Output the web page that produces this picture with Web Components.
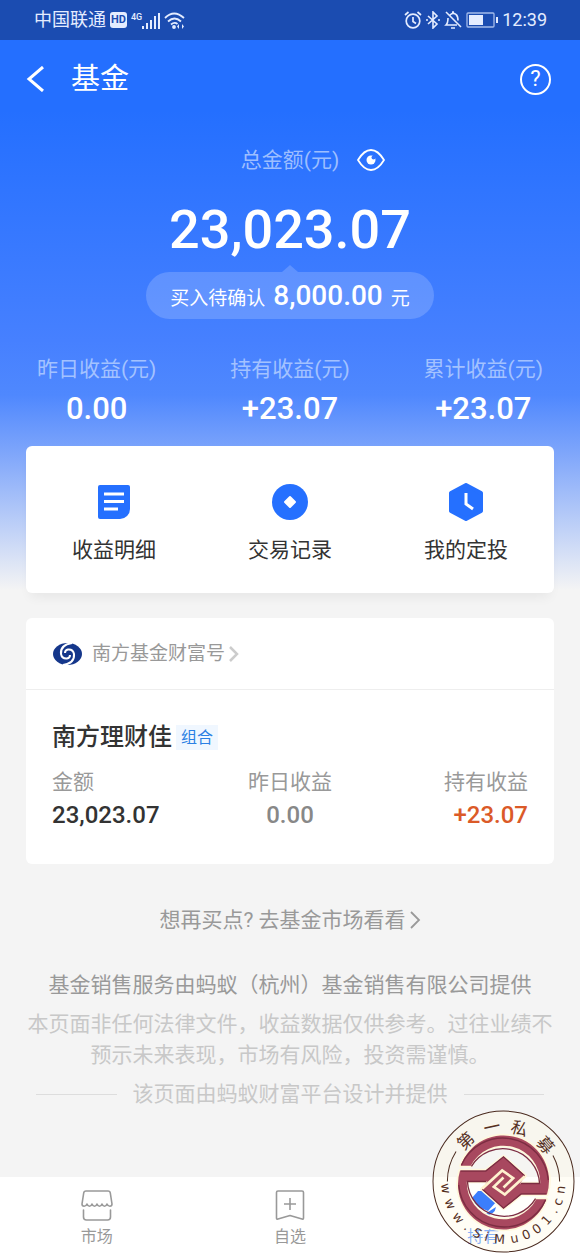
<!DOCTYPE html>
<html lang="zh-CN">
<head>
<meta charset="utf-8">
<meta name="viewport" content="width=device-width, initial-scale=1">
<title>基金</title>
<style>
  html, body { margin: 0; padding: 0; }
  body {
    background: #f4f4f4;
    color: #333;
    font-family: Roboto, "Noto Sans CJK SC", sans-serif;
    font-size: 21px;
    line-height: 28px;
  }
</style>
</head>
<body>
<fund-page>
  <fund-hero>
    <status-bar></status-bar>
    <page-header>基金</page-header>
    <total-amount pending="8,000.00">23,023.07</total-amount>
    <figure-row>
      <figure-item label="昨日收益(元)">0.00</figure-item>
      <figure-item label="持有收益(元)">+23.07</figure-item>
      <figure-item label="累计收益(元)">+23.07</figure-item>
    </figure-row>
    <action-card>
      <quick-action icon="list">收益明细</quick-action>
      <quick-action icon="record">交易记录</quick-action>
      <quick-action icon="plan">我的定投</quick-action>
    </action-card>
  </fund-hero>
  <holding-card></holding-card>
  <page-notice></page-notice>
  <tab-bar slot="tabs">
    <tab-item icon="market">市场</tab-item>
    <tab-item icon="watch">自选</tab-item>
    <tab-item icon="hold" active>持有</tab-item>
  </tab-bar>
  <site-stamp slot="stamp"></site-stamp>
</fund-page>

<script>
const icons = {
  list: `<svg width="36" height="36" viewBox="0 0 36 36"><path d="M4 1h28a2 2 0 0 1 2 2v22a10 10 0 0 1-10 10H4a2 2 0 0 1-2-2V3a2 2 0 0 1 2-2z" fill="#2570ff"/><path d="M8 10h20M8 17.500h20M8 25h14" stroke="#fff" stroke-width="3"/></svg>`,
  record: `<svg width="36" height="36" viewBox="0 0 36 36"><circle cx="18" cy="18" r="18" fill="#2570ff"/><path d="M18 13l5 5-5 5-5-5z" fill="#fff" stroke="#fff" stroke-width="2" stroke-linejoin="round"/></svg>`,
  plan: `<svg width="36" height="38" viewBox="0 0 36 38"><path d="M18 2l15 8v18l-15 8-15-8V10z" fill="#2570ff" stroke="#2570ff" stroke-width="4" stroke-linejoin="round"/><path d="M18 10v11l7 5" fill="none" stroke="#fff" stroke-width="3"/></svg>`,
  market: `<svg width="32" height="32" viewBox="0 0 32 32" fill="none" stroke="#999" stroke-width="1.600" stroke-linejoin="round" stroke-linecap="round"><path d="M5 1h22q2 0 2.300 2l1.700 11c0 3-4 3-5 0-1 3-4 3-5 0-1 3-4 3-5 0-1 3-4 3-5 0-1 3-4 3-5 0-1 3-5 3-5 0L2.700 3Q3 1 5 1z"/><path d="M2.500 20v7q0 3 3 3h21q3 0 3-3v-7"/></svg>`,
  watch: `<svg width="32" height="32" viewBox="0 0 32 32" fill="none" stroke="#999" stroke-width="1.600" stroke-linejoin="round"><path d="M4 1h24q1.500 0 1.500 1.500V28q0 1.500-1.500 1L16 25.500 4 29q-1.500.500-1.500-1V2.500Q2.500 1 4 1zM16 8v12M10 14h12"/></svg>`,
  hold: `<svg width="32" height="32" viewBox="0 0 32 32" fill="#2570ff"><path d="M11 1h15q4 0 4 4v6l-9 10L4 14q0-3 1-6z"/><path d="M29 17q-1 8-12 9l4-4z"/></svg>`
};

class FundPage extends HTMLElement {
  connectedCallback() {
    this.attachShadow({ mode: 'open' }).innerHTML = `
      <style>
        :host { position: relative; display: flex; flex-direction: column; min-height: 100vh; }
        main { flex: 1; }
      </style>
      <main><slot></slot></main>
      <slot name="tabs"></slot>
      <slot name="stamp"></slot>
    `;
  }
}

class FundHero extends HTMLElement {
  connectedCallback() {
    this.attachShadow({ mode: 'open' }).innerHTML = `
      <style>
        :host {
          display: block;
          color: #fff;
          background: linear-gradient(#246fff 0, #246fff 110px, #4680ff 340px, #4f88fe 395px, #7ca4fb 450px, #f4f4f4 590px);
        }
      </style>
      <slot></slot>
    `;
  }
}

class StatusBar extends HTMLElement {
  connectedCallback() {
    this.attachShadow({ mode: 'open' }).innerHTML = `
      <style>
        :host {
          display: flex;
          justify-content: space-between;
          align-items: center;
          height: 40px;
          padding: 0 33px 0 34px;
          background: #1b4cb1;
          color: #e4ecff;
          font-size: 18px;
        }
        div { display: flex; align-items: center; gap: 4px; }
        .hd { background: #e4ecff; color: #1b4cb1; border-radius: 3px; font-size: 11px; font-weight: 700; line-height: 16px; padding: 0 1px; }
        .net { align-self: flex-start; font-size: 9px; line-height: 10px; font-weight: 500; }
        .signal { gap: 0; }
      </style>
      <div>
        <span>中国联通</span><span class="hd">HD</span>
        <div class="signal">
          <span class="net">4G</span>
          <svg width="18" height="17" viewBox="0 0 18 17" stroke="#e4ecff" stroke-width="2"><path d="M1 17v-3M5 17v-6M9 17V8M13 17V4M17 17V1"/></svg>
        </div>
        <svg width="21" height="17" viewBox="0 0 21 17" fill="none" stroke="#e4ecff" stroke-width="1.800"><path d="M1 6q9-9 19 0M4 9.500q6.500-6 13 0M7 12.500q3.500-3 6.500-.500"/><circle cx="10" cy="15" r="1" fill="#e4ecff"/><path d="M15 12v5l-2-2.500zM18 12v5l2-2.500z" stroke="none" fill="#e4ecff"/></svg>
      </div>
      <div>
        <svg width="18" height="18" viewBox="0 0 18 18" fill="none" stroke="#e4ecff" stroke-width="1.700"><circle cx="9" cy="10" r="6.800"/><path d="M9 6v4.500l3 2M1 4l3.500-3M17 4l-3.500-3"/></svg>
        <svg width="14" height="18" viewBox="0 0 14 18" fill="none" stroke="#e4ecff" stroke-width="1.600"><path d="M2 5l9 8-4 4V1l4 4-9 8"/><path d="M0 9h2M12 9h2"/></svg>
        <svg width="18" height="18" viewBox="0 0 18 18" fill="none" stroke="#e4ecff" stroke-width="1.600"><path d="M2 1l15 15M6 4q3-3 6-.500 2 1.500 2 6M4 7q0 5-2 7h11M8 1h2M7 17h4"/></svg>
        <svg width="32" height="16" viewBox="0 0 32 16"><rect x="1" y="1" width="27" height="14" rx="1" fill="none" stroke="#a4baea" stroke-width="1.300"/><path d="M3 3h14v10H3zM30 5h2v6h-2z" fill="#e4ecff"/></svg>
        <span>12:39</span>
      </div>
    `;
  }
}

class PageHeader extends HTMLElement {
  connectedCallback() {
    this.attachShadow({ mode: 'open' }).innerHTML = `
      <style>
        :host { display: flex; align-items: center; height: 78px; padding: 0 29px 0 26px; }
        button { display: flex; padding: 0; border: 0; background: none; color: inherit; cursor: pointer; }
        h1 { flex: 1; margin: 0 0 0 25px; font-size: 29px; line-height: 40px; font-weight: 400; }
        .help {
          box-sizing: border-box;
          width: 31px; height: 31px;
          align-items: center;
          justify-content: center;
          border: 2px solid #fff;
          border-radius: 50%;
          font: 22px/28px Roboto, sans-serif;
        }
      </style>
      <button aria-label="返回"><svg width="20" height="26" viewBox="0 0 20 26" fill="none" stroke="#fff" stroke-width="3"><path d="M17 1L3 13l14 12"/></svg></button>
      <h1><slot></slot></h1>
      <button class="help">?</button>
    `;
  }
}

class TotalAmount extends HTMLElement {
  connectedCallback() {
    this.attachShadow({ mode: 'open' }).innerHTML = `
      <style>
        :host { display: flex; flex-direction: column; align-items: center; padding-top: 28px; }
        .label { display: flex; align-items: center; gap: 18px; padding-left: 46px; color: #9dbeff; }
        button { display: flex; padding: 0; border: 0; background: none; cursor: pointer; }
        .amount { margin: 24px 0 10px; font-size: 54px; line-height: 64px; font-weight: 500; }
        .pending {
          position: relative;
          display: flex;
          align-items: baseline;
          gap: 8px;
          padding: 0 24px;
          border-radius: 24px;
          background: rgba(255, 255, 255, 0.18);
          font-size: 19px;
          line-height: 47px;
        }
        .pending::before {
          content: "";
          position: absolute;
          left: calc(50% - 8px);
          top: -7px;
          border: 8px solid transparent;
          border-top: 0;
          border-bottom: 7px solid rgba(255, 255, 255, 0.18);
        }
        .pending span { line-height: 28px; }
        b { font-size: 28px; font-weight: 500; }
      </style>
      <div class="label">
        <span>总金额(元)</span>
        <button aria-label="隐藏金额"><svg width="28" height="22" viewBox="0 0 28 22"><path d="M1 11Q7 1 14 1t13 10q-6 10-13 10T1 11z" fill="none" stroke="#fff" stroke-width="1.800"/><circle cx="14" cy="11" r="4.500" fill="#fff"/><circle cx="16.500" cy="8.500" r="2" fill="#3274ff"/></svg></button>
      </div>
      <div class="amount"><slot></slot></div>
      <div class="pending"><span>买入待确认</span><b>${this.getAttribute('pending')}</b><span>元</span></div>
    `;
  }
}

class FigureRow extends HTMLElement {
  connectedCallback() {
    this.attachShadow({ mode: 'open' }).innerHTML = `
      <style>
        :host { display: grid; grid-template-columns: repeat(3, 1fr); padding: 36px 0 19px; }
      </style>
      <slot></slot>
    `;
  }
}

class FigureItem extends HTMLElement {
  connectedCallback() {
    this.attachShadow({ mode: 'open' }).innerHTML = `
      <style>
        :host { display: flex; flex-direction: column; align-items: center; gap: 8px; }
        .label { color: #a3c2ff; }
        .value { font-size: 31px; line-height: 36px; font-weight: 500; }
      </style>
      <span class="label">${this.getAttribute('label')}</span>
      <span class="value"><slot></slot></span>
    `;
  }
}

class ActionCard extends HTMLElement {
  connectedCallback() {
    this.attachShadow({ mode: 'open' }).innerHTML = `
      <style>
        :host {
          display: grid;
          grid-template-columns: repeat(3, 1fr);
          margin: 0 26px;
          padding: 38px 0 29px;
          border-radius: 6px;
          background: #fff;
          box-shadow: 0 8px 12px -4px rgba(0, 0, 0, 0.06);
          color: #333;
        }
      </style>
      <slot></slot>
    `;
  }
}

class QuickAction extends HTMLElement {
  connectedCallback() {
    this.attachShadow({ mode: 'open' }).innerHTML = `
      <style>
        :host { display: block; }
        a { display: flex; flex-direction: column; align-items: center; gap: 16px; color: inherit; text-decoration: none; }
        i { display: flex; align-items: center; height: 36px; }
      </style>
      <a href="#"><i>${icons[this.getAttribute('icon')]}</i><span><slot></slot></span></a>
    `;
  }
}

class HoldingCard extends HTMLElement {
  connectedCallback() {
    this.attachShadow({ mode: 'open' }).innerHTML = `
      <style>
        :host { display: block; margin: 25px 26px 0; border-radius: 6px; background: #fff; }
        a { color: inherit; text-decoration: none; }
        .source {
          display: flex;
          align-items: center;
          height: 71px;
          padding: 0 26px;
          border-bottom: 1px solid #eee;
          color: #999;
          font-size: 19px;
        }
        .source span { margin: 0 4px 0 9px; }
        .body { padding: 31px 26px 32px; }
        .title { display: flex; align-items: center; gap: 4px; margin-bottom: 15px; }
        h2 { margin: 0; font-size: 24px; line-height: 32px; font-weight: 500; }
        .tag { padding: 0 5px; background: #f0f7ff; color: #2b80e4; font-size: 16px; line-height: 25px; }
        dl { display: grid; grid-template-columns: repeat(3, 1fr); margin: 0; }
        dl div:nth-child(2) { text-align: center; }
        dl div:nth-child(3) { text-align: right; }
        dt { color: #999; }
        dd { margin: 3px 0 0; font-size: 24px; line-height: 33px; font-weight: 500; }
        .flat { color: #888; }
        .up { color: #db5a28; }
      </style>
      <a class="source" href="#">
        <svg width="31" height="24" viewBox="0 0 31 24">
          <ellipse cx="15.500" cy="12" rx="14.500" ry="11" fill="#15378b"/>
          <path d="M20 1Q8 3 9 12q1 5 6 4.500 3-.500 3-3.500M11 23Q23 21 22 12q-1-5-6-4.500-3 .500-3 3.500" fill="none" stroke="#fff" stroke-width="2"/>
        </svg>
        <span>南方基金财富号</span>
        <svg width="10" height="16" viewBox="0 0 10 16" fill="none" stroke="#ccc" stroke-width="2.500"><path d="M1 1l7 7-7 7"/></svg>
      </a>
      <div class="body">
        <div class="title"><h2>南方理财佳</h2><span class="tag">组合</span></div>
        <dl>
          <div><dt>金额</dt><dd>23,023.07</dd></div>
          <div><dt>昨日收益</dt><dd class="flat">0.00</dd></div>
          <div><dt>持有收益</dt><dd class="up">+23.07</dd></div>
        </dl>
      </div>
    `;
  }
}

class PageNotice extends HTMLElement {
  connectedCallback() {
    this.attachShadow({ mode: 'open' }).innerHTML = `
      <style>
        :host { display: block; padding: 42px 26px 68px; text-align: center; color: #c8c8c8; }
        a { display: flex; justify-content: center; align-items: center; gap: 4px; color: #999; text-decoration: none; }
        p { margin: 0; }
        .seller { margin: 37px 0 10px; color: #999; }
        .risk { line-height: 31px; }
        .credit { display: flex; align-items: center; gap: 16px; margin: 9px 10px 0; }
        .credit::before, .credit::after { content: ""; flex: 1; height: 1px; background: #ddd; }
      </style>
      <a href="#">想再买点? 去基金市场看看<svg width="11" height="18" viewBox="0 0 11 18" fill="none" stroke="#999" stroke-width="1.800"><path d="M1 1l8 8-8 8"/></svg></a>
      <p class="seller">基金销售服务由蚂蚁（杭州）基金销售有限公司提供</p>
      <p class="risk">本页面非任何法律文件，收益数据仅供参考。过往业绩不预示未来表现，市场有风险，投资需谨慎。</p>
      <p class="credit">该页面由蚂蚁财富平台设计并提供</p>
    `;
  }
}

class TabBar extends HTMLElement {
  connectedCallback() {
    this.attachShadow({ mode: 'open' }).innerHTML = `
      <style>
        :host { display: block; background: #fff; }
        nav { display: grid; grid-template-columns: repeat(3, 1fr); padding: 13px 0 8px; }
      </style>
      <nav><slot></slot></nav>
    `;
  }
}

class TabItem extends HTMLElement {
  connectedCallback() {
    this.attachShadow({ mode: 'open' }).innerHTML = `
      <style>
        :host { display: block; color: #999; }
        :host([active]) { color: #3b82ff; }
        a { display: flex; flex-direction: column; align-items: center; gap: 3px; color: inherit; text-decoration: none; font-size: 16px; line-height: 24px; }
        svg { display: block; }
      </style>
      <a href="#">${icons[this.getAttribute('icon')]}<span><slot></slot></span></a>
    `;
  }
}

// Round seal floating over the bottom corner, each character set on the ring.
class SiteStamp extends HTMLElement {
  ring(text, angles, radius, bottom) {
    const xs = [], ys = [], turns = [];
    for (const deg of angles) {
      const a = deg * Math.PI / 180;
      xs.push(Math.round(250 + radius * Math.sin(a)));
      ys.push(Math.round(244 + radius * Math.cos(a) * (bottom ? 1 : -1)));
      turns.push(bottom ? -deg : deg);
    }
    return `<text x="${xs.join(' ')}" y="${ys.join(' ')}" rotate="${turns.join(' ')}" class="${bottom ? 'url' : 'name'}">${text}</text>`;
  }
  connectedCallback() {
    const half = '<path d="M122 197A136 136 0 0 1 380 283H303L250 325 185 267 250 210 280 250H360A110 110 0 0 0 152 197z"/>';
    const edge = '<path d="M124 195A136 136 0 0 1 384 240M154 199A110 110 0 0 1 358 250H302M378 281H303L250 324 187 267"/>';
    const groove = '<path d="M186 266L246 211 279 234 250 262"/>';
    const turned = shape => `${shape}<g transform="rotate(180 250 247)">${shape}</g>`;
    this.attachShadow({ mode: 'open' }).innerHTML = `
      <style>
        :host { position: absolute; right: 5px; bottom: 4px; pointer-events: none; }
        svg { display: block; }
        .name { font: 50px "Noto Sans CJK SC", sans-serif; }
        .url { font: 38px "DejaVu Sans", sans-serif; }
        text { fill: #55301f; }
      </style>
      <svg width="143" height="143" viewBox="36 30 428 428">
        <circle cx="250" cy="244" r="172" fill="none" stroke="#fffbe6" stroke-opacity="0.4" stroke-width="76"/>
        <circle cx="250" cy="244" r="134" fill="#fffbe6" fill-opacity="0.1"/>
        <circle cx="250" cy="244" r="211" fill="none" stroke="#4a2a1e" stroke-width="3"/>
        <path d="M82 244A168 168 0 0 1 108 154M418 244A168 168 0 0 0 398 166" fill="none" stroke="#4a2a1e" stroke-width="3"/>
        <g fill="#a8485f" stroke="#fff8dc" stroke-width="10" paint-order="stroke" stroke-linejoin="round">${turned(half)}</g>
        <path d="M250 172L314 228 250 323 186 267z" fill="#a8485f"/>
        <g fill="none" stroke="#7c2d42" stroke-width="4">${turned(edge)}</g>
        <g fill="none" stroke="#fff2cf" stroke-width="8">${turned(groove)}</g>
        ${this.ring('第一私募', [-43, -12, 17, 49], 148, false)}
        ${this.ring('www.SiMu001.cn', [-83, -67, -51, -39, -27, -17, -4, 11, 23, 35, 48, 60, 70, 82], 186, true)}
      </svg>
    `;
    // centre every glyph on its own anchor
    this.shadowRoot.querySelectorAll('text').forEach(t => {
      const turns = t.getAttribute('rotate').split(' ').map(Number);
      const xs = t.getAttribute('x').split(' ').map(Number);
      const ys = t.getAttribute('y').split(' ').map(Number);
      const size = parseFloat(getComputedStyle(t).fontSize);
      [...t.textContent].forEach((ch, i) => {
        const w = t.classList.contains('name') ? size : size * (/[.i]/.test(ch) ? 0.3 : /[wM]/.test(ch) ? 0.84 : 0.63);
        const a = turns[i] * Math.PI / 180;
        xs[i] -= Math.cos(a) * w / 2;
        ys[i] -= Math.sin(a) * w / 2;
      });
      t.setAttribute('x', xs.map(Math.round).join(' '));
      t.setAttribute('y', ys.map(Math.round).join(' '));
    });
  }
}

customElements.define('fund-page', FundPage);
customElements.define('fund-hero', FundHero);
customElements.define('status-bar', StatusBar);
customElements.define('page-header', PageHeader);
customElements.define('total-amount', TotalAmount);
customElements.define('figure-row', FigureRow);
customElements.define('figure-item', FigureItem);
customElements.define('action-card', ActionCard);
customElements.define('quick-action', QuickAction);
customElements.define('holding-card', HoldingCard);
customElements.define('page-notice', PageNotice);
customElements.define('tab-bar', TabBar);
customElements.define('tab-item', TabItem);
customElements.define('site-stamp', SiteStamp);
</script>
</body>
</html>
